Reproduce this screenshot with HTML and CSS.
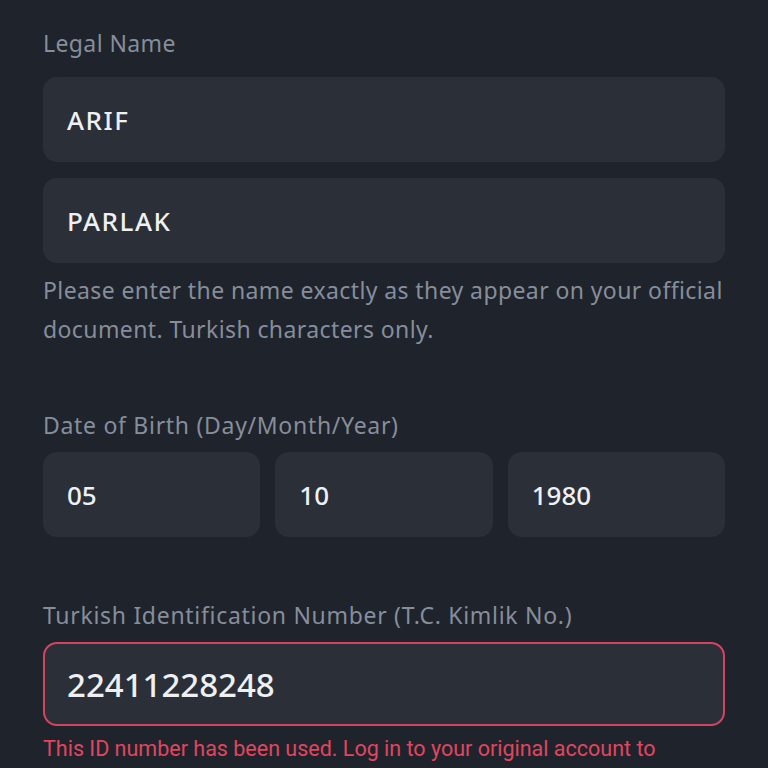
FILE: index.html
```html
<!DOCTYPE html>
<html lang="en">
<head>
<meta charset="utf-8">
<title>Identity Verification</title>
<link rel="stylesheet" href="styles.css">
</head>
<body>
<main class="form">
  <section class="group">
    <div class="label label-first">Legal Name</div>
    <div class="field field-name">ARIF</div>
    <div class="field field-name field-gap">PARLAK</div>
    <p class="hint">Please enter the name exactly as they appear on your official<br>document. Turkish characters only.</p>
  </section>
  <section class="group group-spaced">
    <div class="label">Date of Birth (Day/Month/Year)</div>
    <div class="date-row">
      <div class="field">05</div>
      <div class="field">10</div>
      <div class="field">1980</div>
    </div>
  </section>
  <section class="group group-spaced group-id">
    <div class="label">Turkish Identification Number (T.C. Kimlik No.)</div>
    <div class="field field-error">22411228248</div>
    <p class="error">This ID number has been used. Log in to your original account to</p>
  </section>
</main>
</body>
</html>
```
FILE: styles.css
```css
html, body {
  margin: 0;
  padding: 0;
  background: #1f232b;
}
body {
  font-family: "Noto Sans", Roboto, "Liberation Sans", sans-serif;
  height: 768px;
  overflow: hidden;
}
.form {
  padding: 28px 43px 0 43px;
}
.label {
  color: #868e9b;
  font-size: 23px;
  line-height: 30px;
  letter-spacing: 0.7px;
  margin-bottom: 12px;
}
.label-first {
  margin-bottom: 19px;
  letter-spacing: 0.4px;
}
.field {
  box-sizing: border-box;
  height: 85px;
  background: #2a2f38;
  border-radius: 14px;
  padding: 0 24px;
  display: flex;
  align-items: center;
  color: #eef0f3;
  font-size: 26px;
  font-weight: 500;
}
.field-name {
  letter-spacing: 1.5px;
}
.field-gap {
  margin-top: 16px;
}
.hint {
  margin: 8px 0 0 0;
  color: #868e9b;
  font-size: 23px;
  line-height: 39px;
  letter-spacing: 0.4px;
  white-space: nowrap;
}
.group-spaced {
  margin-top: 61px;
}
.group-id {
  margin-top: 63px;
}
.date-row {
  display: grid;
  grid-template-columns: 1fr 1fr 1fr;
  gap: 15px;
}
.field-error {
  height: 84px;
  border: 2px solid #d4445f;
  font-size: 33px;
  padding-left: 22px;
}
.error {
  margin: 8px 0 0 0;
  color: #e0465f;
  font-family: Roboto, "Noto Sans", sans-serif;
  font-size: 21.5px;
  line-height: 30px;
}
```
